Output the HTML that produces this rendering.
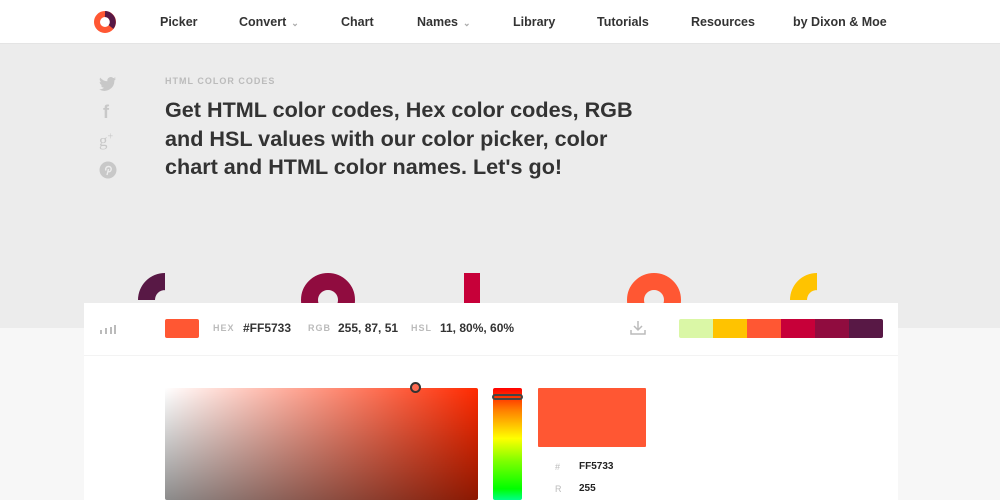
<!DOCTYPE html>
<html><head><style>
*{margin:0;padding:0;box-sizing:border-box}
body{width:1000px;height:500px;overflow:hidden;background:#f7f7f7;font-family:"Liberation Sans",sans-serif;position:relative}
.nav{position:absolute;left:0;top:0;width:1000px;height:44px;background:#fff;border-bottom:1px solid #e4e4e4}
.nav span{position:absolute;top:15px;font-size:12.5px;font-weight:bold;color:#333}
.nav i{font-style:normal;color:#aaa;font-size:9px;margin-left:5px}
.hero{position:absolute;left:0;top:44px;width:1000px;height:284px;background:#ececec}
.abs{position:absolute}
.lbl{left:165px;top:76px;font-size:9px;font-weight:bold;color:#bbb;letter-spacing:1px}
.h1{left:165px;top:96px;font-size:21.6px;font-weight:bold;color:#333;line-height:28.5px}
.card{left:84px;top:303px;width:814px;height:197px;background:#fff}
.tb{font-size:12px;font-weight:bold;color:#333;top:321px}
.tl{font-size:9px;color:#bbb;letter-spacing:1px;top:323px;font-weight:bold}
</style></head><body>
<div class="nav">
<svg class="abs" style="left:94px;top:11px" width="22" height="22"><circle cx="11" cy="11" r="8" fill="none" stroke="#ff5733" stroke-width="6"/><path d="M11 3 A8 8 0 0 1 17 16" fill="none" stroke="#581845" stroke-width="6"/></svg>
<span style="left:160px">Picker</span>
<span style="left:239px">Convert<i>⌄</i></span>
<span style="left:341px">Chart</span>
<span style="left:417px">Names<i>⌄</i></span>
<span style="left:513px">Library</span>
<span style="left:597px">Tutorials</span>
<span style="left:691px">Resources</span>
<span style="left:793px">by Dixon &amp; Moe</span>
</div>
<div class="hero"></div>
<svg class="abs" style="left:99px;top:76px" width="18" height="16"><path d="M17 2.5c-.6.3-1.3.5-2 .6.7-.4 1.3-1.1 1.5-1.9-.7.4-1.4.7-2.2.9A3.5 3.5 0 0 0 8.4 5.3 10 10 0 0 1 1.2 1.6a3.5 3.5 0 0 0 1.1 4.7c-.6 0-1.1-.2-1.6-.4 0 1.7 1.2 3.1 2.8 3.4-.5.2-1.1.2-1.6.1.5 1.4 1.7 2.4 3.3 2.4A7 7 0 0 1 0 13.3 10 10 0 0 0 15.4 4.8V4.4c.6-.5 1.2-1.1 1.6-1.9z" fill="#c8c8c8"/></svg>
<div class="abs" style="left:103px;top:102px;font-size:18px;font-weight:bold;color:#c8c8c8">f</div>
<div class="abs" style="left:99px;top:131px;font-size:17px;color:#c8c8c8;font-family:'Liberation Serif'">g<sup style="font-size:10px">+</sup></div>
<svg class="abs" style="left:99px;top:161px" width="18" height="18"><circle cx="9" cy="9" r="8.5" fill="#c8c8c8"/><path d="M8 14l1.5-6M7 9.5c-1-2 .5-4 2.5-4s3 1.3 2.6 3.2c-.3 1.6-1.6 2.4-2.6 1.8" fill="none" stroke="#ececec" stroke-width="1.4"/></svg>
<div class="abs lbl">HTML COLOR CODES</div>
<div class="abs h1">Get HTML color codes, Hex color codes, RGB<br>and HSL values with our color picker, color<br>chart and HTML color names. Let's go!</div>
<svg class="abs" style="left:0;top:260px" width="1000" height="50">
<path d="M165 40 L165 13 A27 27 0 0 0 138 40 L155 40 A10 10 0 0 1 165 30 Z" fill="#581845"/>
<circle cx="328" cy="40" r="18.5" fill="none" stroke="#900c3f" stroke-width="17"/>
<rect x="464" y="13" width="16" height="40" fill="#c70039"/>
<circle cx="654" cy="40" r="18.5" fill="none" stroke="#ff5733" stroke-width="17"/>
<path d="M817 40 L817 13 A27 27 0 0 0 790 40 L807 40 A10 10 0 0 1 817 30 Z" fill="#ffc300"/>
</svg>
<div class="abs card"></div>
<div class="abs" style="left:84px;top:355px;width:814px;height:1px;background:#f3f3f3"></div>
<svg class="abs" style="left:99px;top:323px" width="18" height="12"><g fill="#bbb"><rect x="1" y="7" width="2" height="4"/><rect x="6" y="5" width="2" height="6"/><rect x="11" y="4" width="2" height="7"/><rect x="15" y="2" width="2" height="9"/></g></svg>
<div class="abs" style="left:165px;top:319px;width:34px;height:19px;background:#ff5733;border-radius:2px"></div>
<div class="abs tl" style="left:213px">HEX</div><div class="abs tb" style="left:243px">#FF5733</div>
<div class="abs tl" style="left:308px">RGB</div><div class="abs tb" style="left:338px">255, 87, 51</div>
<div class="abs tl" style="left:411px">HSL</div><div class="abs tb" style="left:440px">11, 80%, 60%</div>
<svg class="abs" style="left:629px;top:320px" width="18" height="16"><path d="M9 1v9M5 6l4 4 4-4M2 10v4h14v-4" fill="none" stroke="#bbb" stroke-width="1.5"/></svg>
<div class="abs" style="left:679px;top:319px;width:204px;height:19px;display:flex;border-radius:2px;overflow:hidden">
<div style="flex:1;background:#daf7a6"></div><div style="flex:1;background:#ffc300"></div><div style="flex:1;background:#ff5733"></div><div style="flex:1;background:#c70039"></div><div style="flex:1;background:#900c3f"></div><div style="flex:1;background:#581845"></div></div>
<div class="abs" style="left:165px;top:388px;width:313px;height:112px;background:linear-gradient(to bottom,rgba(0,0,0,0),rgba(0,0,0,.45)),linear-gradient(to right,#fff,#ff2a00);border-radius:2px"></div>
<div class="abs" style="left:410px;top:382px;width:11px;height:11px;border:2px solid #333;border-radius:50%;background:#ff6a50"></div>
<div class="abs" style="left:493px;top:388px;width:29px;height:112px;background:linear-gradient(#f00 0%,#ff8000 20%,#ff0 45%,#80ff00 65%,#0f0 90%,#0f8 100%);border-radius:2px"></div>
<div class="abs" style="left:492px;top:394px;width:31px;height:6px;border:2px solid #444;border-radius:3px"></div>
<div class="abs" style="left:538px;top:388px;width:108px;height:59px;background:#ff5733;border-radius:1px"></div>
<div class="abs" style="left:555px;top:462px;font-size:9px;color:#bbb">#</div>
<div class="abs" style="left:579px;top:461px;font-size:10px;font-weight:bold;color:#222">FF5733</div>
<div class="abs" style="left:555px;top:484px;font-size:9px;color:#bbb">R</div>
<div class="abs" style="left:579px;top:483px;font-size:10px;font-weight:bold;color:#222">255</div>
</body></html>
